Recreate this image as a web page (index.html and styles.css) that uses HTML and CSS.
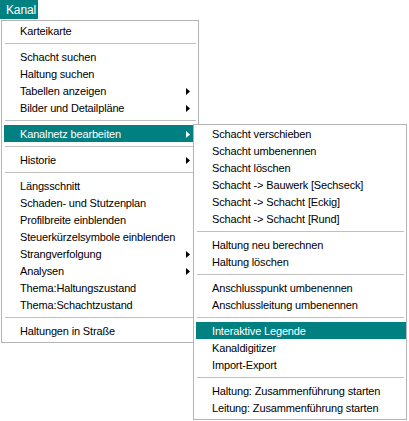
FILE: index.html
```html
<!DOCTYPE html>
<html lang="de">
<head>
<meta charset="utf-8">
<title>Kanal Menü</title>
<link rel="stylesheet" href="styles.css">
</head>
<body>
<div class="menubar">
  <div class="menubar-item">Kanal</div>
</div>
<div class="menu main">
  <div class="item">Karteikarte</div>
  <div class="sep"></div>
  <div class="item">Schacht suchen</div>
  <div class="item">Haltung suchen</div>
  <div class="item">Tabellen anzeigen<span class="arrow"></span></div>
  <div class="item">Bilder und Detailpläne<span class="arrow"></span></div>
  <div class="sep"></div>
  <div class="item active">Kanalnetz bearbeiten<span class="arrow"></span></div>
  <div class="sep"></div>
  <div class="item">Historie<span class="arrow"></span></div>
  <div class="sep"></div>
  <div class="item">Längsschnitt</div>
  <div class="item">Schaden- und Stutzenplan</div>
  <div class="item">Profilbreite einblenden</div>
  <div class="item">Steuerkürzelsymbole einblenden</div>
  <div class="item">Strangverfolgung<span class="arrow"></span></div>
  <div class="item">Analysen<span class="arrow"></span></div>
  <div class="item">Thema:Haltungszustand</div>
  <div class="item">Thema:Schachtzustand</div>
  <div class="sep"></div>
  <div class="item">Haltungen in Straße</div>
</div>
<div class="menu sub">
  <div class="item">Schacht verschieben</div>
  <div class="item">Schacht umbenennen</div>
  <div class="item">Schacht löschen</div>
  <div class="item">Schacht -&gt; Bauwerk [Sechseck]</div>
  <div class="item">Schacht -&gt; Schacht [Eckig]</div>
  <div class="item">Schacht -&gt; Schacht [Rund]</div>
  <div class="sep"></div>
  <div class="item">Haltung neu berechnen</div>
  <div class="item">Haltung löschen</div>
  <div class="sep"></div>
  <div class="item">Anschlusspunkt umbenennen</div>
  <div class="item">Anschlussleitung umbenennen</div>
  <div class="sep"></div>
  <div class="item active">Interaktive Legende</div>
  <div class="item">Kanaldigitizer</div>
  <div class="item">Import-Export</div>
  <div class="sep"></div>
  <div class="item">Haltung: Zusammenführung starten</div>
  <div class="item">Leitung: Zusammenführung starten</div>
</div>
</body>
</html>
```

FILE: styles.css
```css
html, body {
  margin: 0;
  padding: 0;
  background: #ffffff;
}

body {
  position: relative;
  width: 409px;
  height: 421px;
  overflow: hidden;
  font-family: "Liberation Sans", Arial, sans-serif;
  font-size: 11px;
  letter-spacing: -0.15px;
  color: #000000;
}

.menubar {
  display: flex;
  height: 19px;
}

.menubar-item {
  width: 38px;
  box-sizing: border-box;
  padding: 1px 0 0 6px;
  background: #008080;
  color: #ffffff;
  line-height: 18px;
  font-size: 12px;
}

.menu {
  box-sizing: border-box;
  border: 1px solid #b4b4b4;
  background: #ffffff;
}

.main {
  width: 198px;
  margin: 1px 0 0 1px;
  padding: 1px 0 3px 2px;
}

.sub {
  position: absolute;
  left: 193px;
  top: 124px;
  width: 214px;
  padding: 0 0 3px 2px;
}

.item {
  display: flex;
  align-items: center;
  box-sizing: border-box;
  height: 17px;
  padding: 2px 0 0 16px;
  line-height: 15px;
  white-space: nowrap;
}

.item.active {
  background: #008080;
  color: #ffffff;
}

.arrow {
  width: 4px;
  height: 7px;
  margin-left: auto;
  margin-right: 8px;
  background: currentColor;
  clip-path: polygon(0 0, 100% 50%, 0 100%);
}

.sep {
  height: 1px;
  margin: 4px 2px 4px 1px;
  background: #c0c0c0;
}
```
